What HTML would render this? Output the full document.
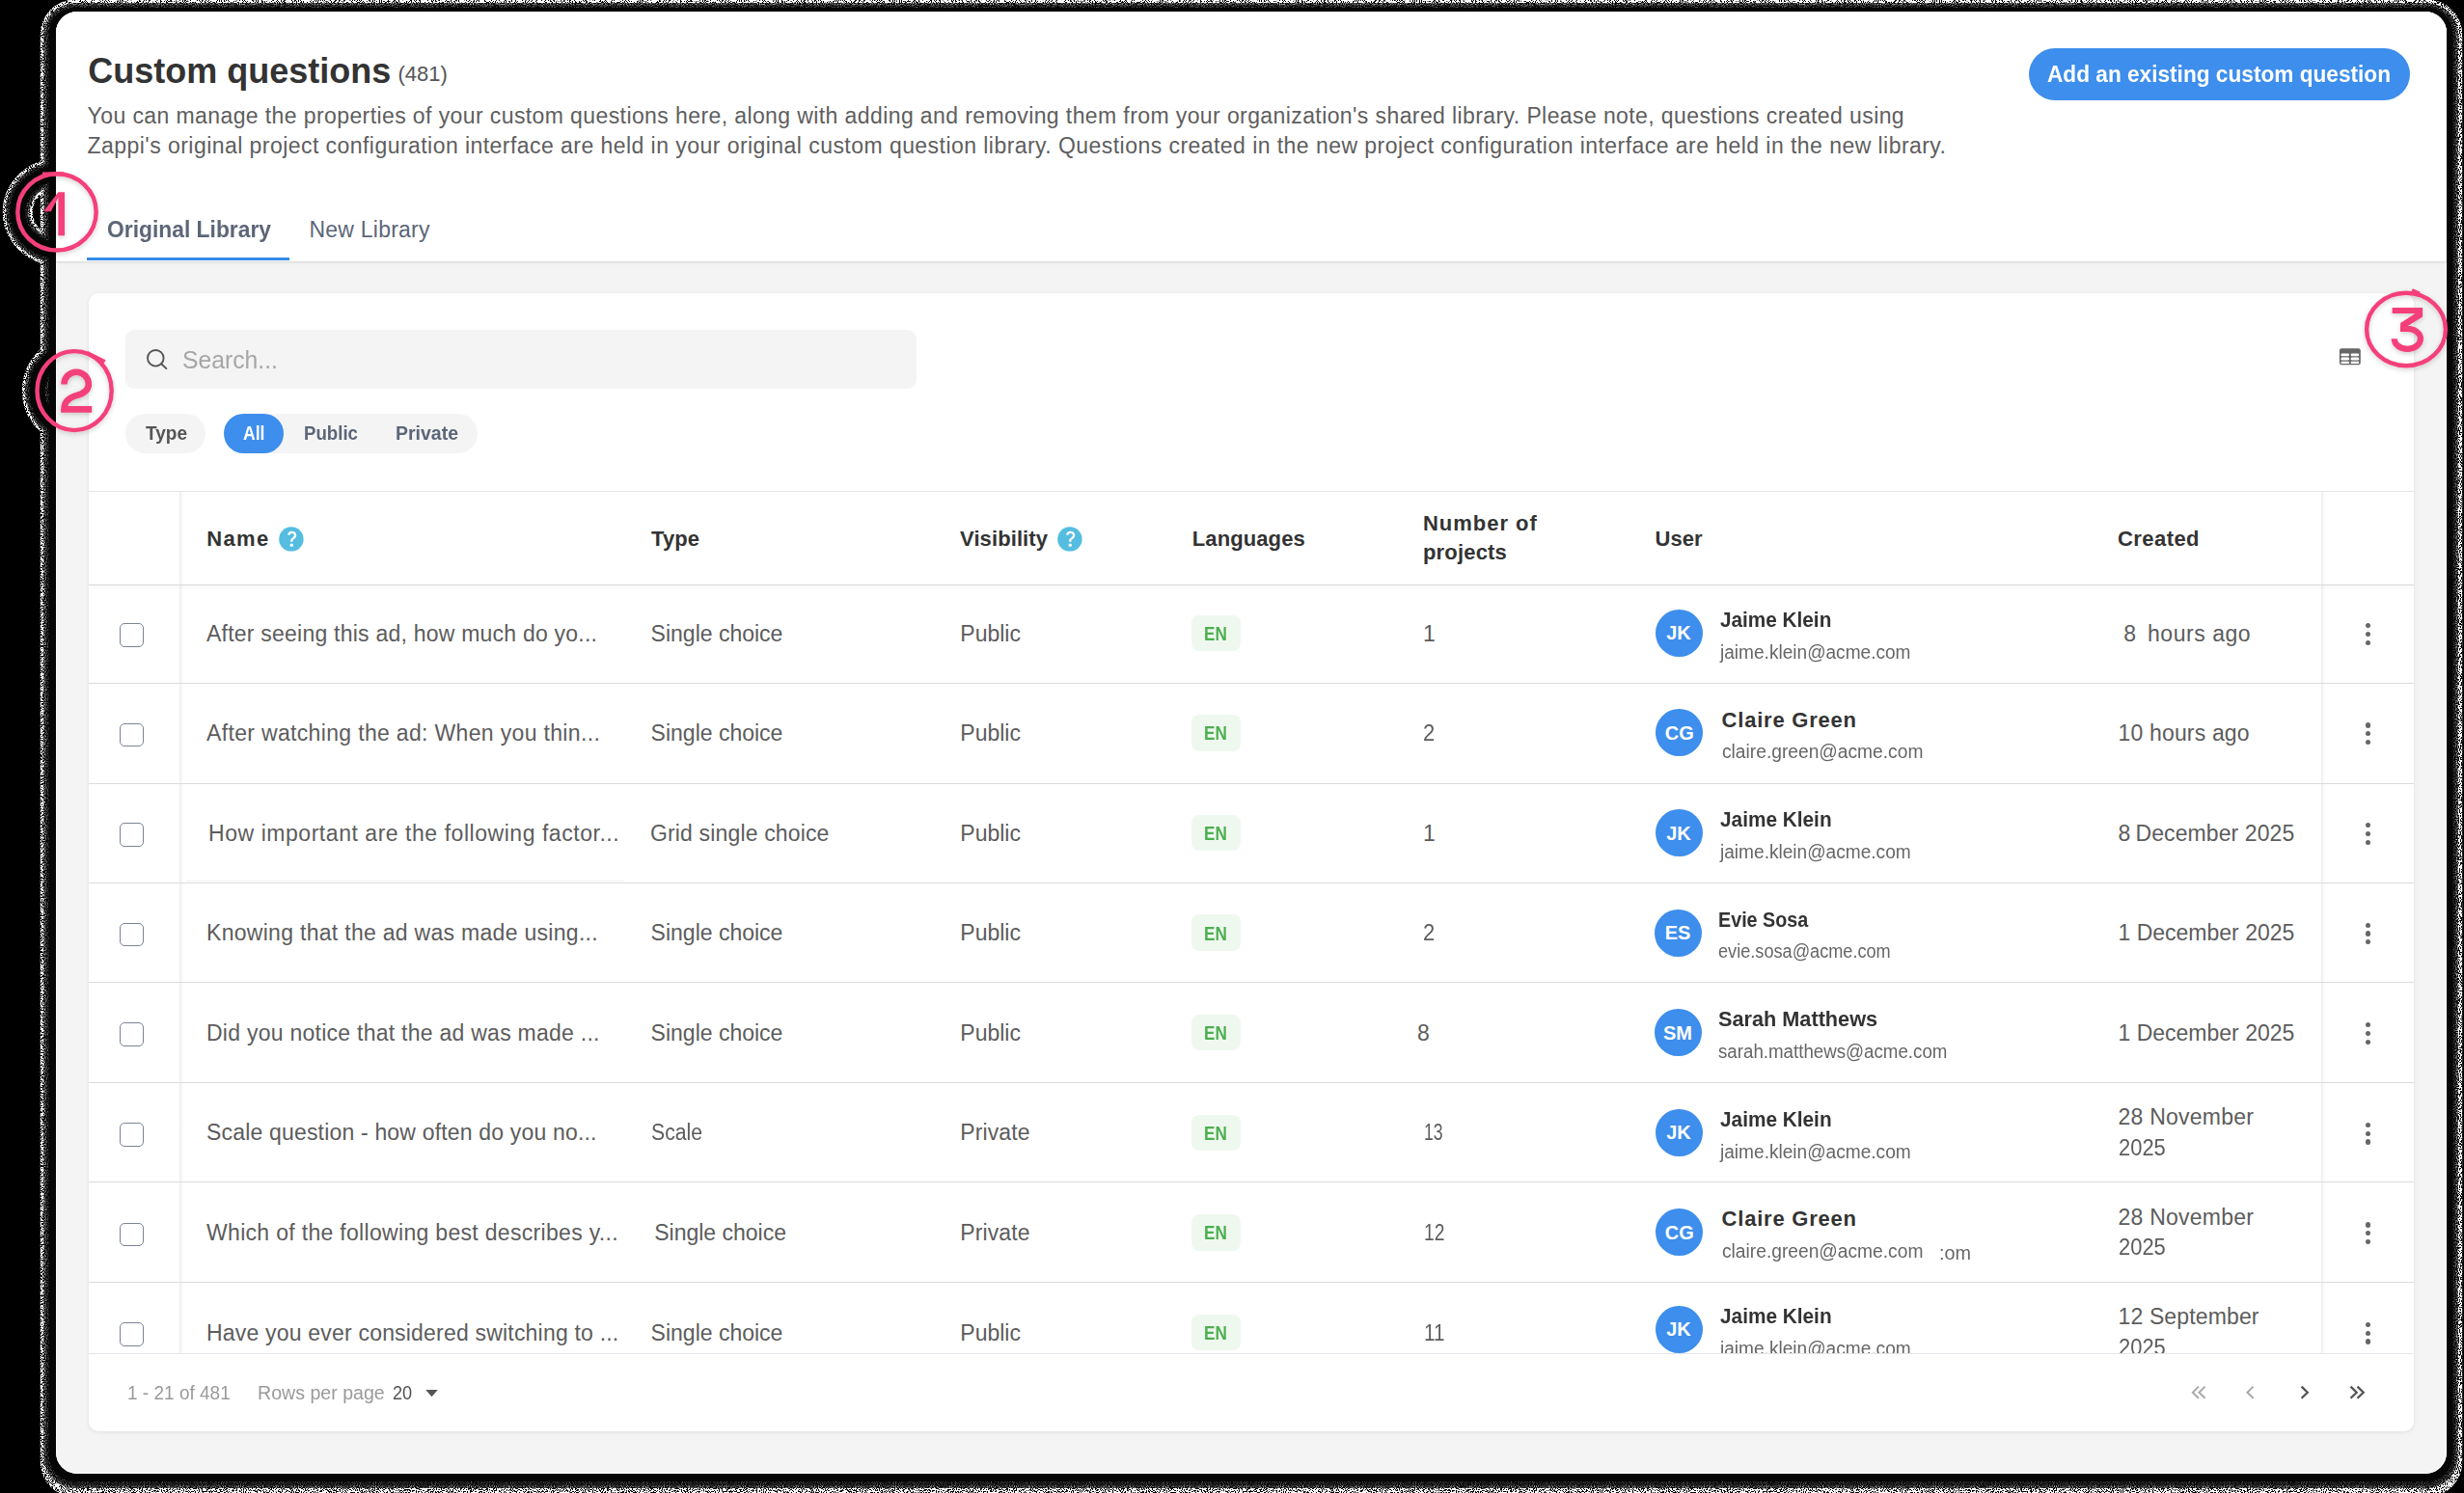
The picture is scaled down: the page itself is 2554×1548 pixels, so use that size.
<!DOCTYPE html>
<html><head><meta charset="utf-8">
<style>
html,body{margin:0;padding:0;}
body{width:2554px;height:1548px;background:#000;position:relative;overflow:hidden;font-family:"Liberation Sans",sans-serif;}
.abs{position:absolute;}
.t{position:absolute;white-space:pre;}
#panel{position:absolute;left:58px;top:12px;width:2478px;height:1516px;border-radius:22px;background:#f4f4f4;overflow:hidden;box-shadow:inset 0 0 0 1px #fff;}
.badge{position:absolute;width:51.25px;height:37.5px;border-radius:8px;background:#eff8ef;}
.av{position:absolute;width:49px;height:49px;border-radius:50%;background:#3d8eed;}
.dot{position:absolute;width:5.2px;height:5.2px;border-radius:50%;background:#666;}
.cb{position:absolute;width:22.6px;height:22.6px;border:1.5px solid #7a8494;border-radius:5px;background:#fff;}
</style></head>
<body>
<!-- halo -->
<svg class="abs" style="left:0;top:0" width="2554" height="1548" viewBox="0 0 2554 1548">
  <defs>
    <filter id="nzA" filterUnits="userSpaceOnUse" x="-20" y="-20" width="2600" height="1600" color-interpolation-filters="sRGB">
      <feTurbulence type="fractalNoise" baseFrequency="0.95" numOctaves="1" seed="3" result="n"/>
      <feColorMatrix in="n" type="matrix" values="0 0 0 40 -17.8  0 0 0 40 -17.8  0 0 0 40 -17.8  0 0 0 0 1" result="bw"/>
      <feComposite in="bw" in2="SourceGraphic" operator="in"/>
    </filter>
    <filter id="nzB" filterUnits="userSpaceOnUse" x="-20" y="-20" width="2600" height="1600" color-interpolation-filters="sRGB">
      <feTurbulence type="fractalNoise" baseFrequency="0.95" numOctaves="1" seed="7" result="n"/>
      <feColorMatrix in="n" type="matrix" values="0 0 0 2.4 -1.0  0 0 0 2.4 -1.0  0 0 0 2.4 -1.0  0 0 0 0 1" result="bw"/>
      <feComposite in="bw" in2="SourceGraphic" operator="in"/>
    </filter>
    <filter id="nzC" filterUnits="userSpaceOnUse" x="-20" y="-20" width="2600" height="1600" color-interpolation-filters="sRGB">
      <feTurbulence type="fractalNoise" baseFrequency="0.95" numOctaves="1" seed="11" result="n"/>
      <feColorMatrix in="n" type="matrix" values="0 0 0 1.1 -0.45  0 0 0 1.1 -0.45  0 0 0 1.1 -0.45  0 0 0 0 1" result="bw"/>
      <feComposite in="bw" in2="SourceGraphic" operator="in"/>
    </filter>
  </defs>
  <g filter="url(#nzA)">
    <rect x="41.8" y="-0.5" width="2510.4" height="1552.5" rx="36" fill="#fff"/>
    <ellipse cx="59" cy="219.9" rx="40.7" ry="39.6" fill="none" stroke="#fff" stroke-width="31"/>
    <ellipse cx="77.1" cy="405.1" rx="38.6" ry="41" fill="none" stroke="#fff" stroke-width="31"/>
  </g>
  <g filter="url(#nzB)">
    <rect x="45" y="3.1" width="2503" height="1540" rx="33" fill="#fff"/>
    <ellipse cx="59" cy="219.9" rx="40.7" ry="39.6" fill="none" stroke="#fff" stroke-width="25"/>
    <ellipse cx="77.1" cy="405.1" rx="38.6" ry="41" fill="none" stroke="#fff" stroke-width="25"/>
  </g>
  <g filter="url(#nzC)">
    <rect x="47.6" y="5.6" width="2497.8" height="1534.6" rx="30" fill="#fff"/>
    <ellipse cx="59" cy="219.9" rx="40.7" ry="39.6" fill="none" stroke="#fff" stroke-width="21"/>
    <ellipse cx="77.1" cy="405.1" rx="38.6" ry="41" fill="none" stroke="#fff" stroke-width="21"/>
  </g>
  <rect x="50.5" y="8" width="2492" height="1528" rx="27" fill="#060606"/>
    <ellipse cx="59" cy="219.9" rx="40.7" ry="39.6" fill="none" stroke="#060606" stroke-width="16"/>
    <ellipse cx="77.1" cy="405.1" rx="38.6" ry="41" fill="none" stroke="#060606" stroke-width="16"/>
</svg>

<div id="panel">
  <div class="abs" style="left:0;top:0;width:2478px;height:259px;background:#fff;border-bottom:1.5px solid #dcdcdc;box-shadow:0 1px 2px rgba(0,0,0,0.06)"></div>
</div>

<!-- button -->
<div class="abs" style="left:2103px;top:50px;width:395px;height:54px;border-radius:27px;background:#3d8eed"></div>
<!-- tab underline -->
<div class="abs" style="left:90px;top:267px;width:210px;height:3px;background:#338bea"></div>

<!-- card -->
<div class="abs" style="left:92px;top:304px;width:2410px;height:1180px;border-radius:10px;background:#fff;box-shadow:0 1px 4px rgba(0,0,0,0.09)"></div>

<!-- search -->
<div class="abs" style="left:130px;top:342px;width:820px;height:61px;border-radius:9px;background:#f4f4f4"></div>
<svg class="abs" style="left:150px;top:360px" width="26" height="26" viewBox="0 0 26 26">
  <circle cx="11.3" cy="11.3" r="8.3" fill="none" stroke="#555" stroke-width="1.9"/>
  <line x1="17.2" y1="17.2" x2="22.4" y2="22.1" stroke="#555" stroke-width="1.9" stroke-linecap="round"/>
</svg>
<!-- pills -->
<div class="abs" style="left:130px;top:429.25px;width:83px;height:40.75px;border-radius:20.4px;background:#f4f4f4"></div>
<div class="abs" style="left:232px;top:429.25px;width:263px;height:40.75px;border-radius:20.4px;background:#f4f4f4"></div>
<div class="abs" style="left:232px;top:429.25px;width:61.75px;height:40.75px;border-radius:20.4px;background:#3d8eed"></div>

<!-- table icon -->
<svg class="abs" style="left:2424px;top:360px" width="24" height="20" viewBox="0 0 24 20">
  <rect x="0.9" y="1.3" width="21.9" height="17" rx="2.2" fill="#666"/>
  <rect x="2.4" y="6.4" width="8.6" height="2.9" rx="1.3" fill="#fff"/>
  <rect x="12.6" y="6.4" width="8.6" height="2.9" rx="1.3" fill="#fff"/>
  <rect x="2.4" y="10.6" width="8.6" height="2.9" rx="1.3" fill="#fff"/>
  <rect x="12.6" y="10.6" width="8.6" height="2.9" rx="1.3" fill="#fff"/>
  <rect x="2.4" y="14.7" width="8.6" height="2.4" rx="1.2" fill="#fff"/>
  <rect x="12.6" y="14.7" width="8.6" height="2.4" rx="1.2" fill="#fff"/>
</svg>

<!-- table frame -->
<div class="abs" style="left:92px;top:509px;width:2410px;height:1px;background:#e6e6ea"></div>

<!-- body clip -->
<div class="abs" style="left:0;top:0;width:2554px;height:1403px;overflow:hidden">
  <div class="abs" style="left:186px;top:510px;width:4px;height:900px;background:linear-gradient(to right,#ebebeb,#f6f6f6 40%,#fdfdfd)"></div>
  <div class="abs" style="left:2406px;top:510px;width:4px;height:900px;background:linear-gradient(to right,#ebebeb,#f6f6f6 40%,#fdfdfd)"></div>
  <div class="abs" style="left:92px;top:708px;width:2410px;height:1px;background:#dcdcdc"></div>
  <div class="abs" style="left:92px;top:812px;width:2410px;height:1px;background:#dcdcdc"></div>
  <div class="abs" style="left:92px;top:915px;width:2410px;height:1px;background:#dcdcdc"></div>
  <div class="abs" style="left:92px;top:1018px;width:2410px;height:1px;background:#dcdcdc"></div>
  <div class="abs" style="left:92px;top:1122px;width:2410px;height:1px;background:#dcdcdc"></div>
  <div class="abs" style="left:92px;top:1225px;width:2410px;height:1px;background:#dcdcdc"></div>
  <div class="abs" style="left:92px;top:1329px;width:2410px;height:1px;background:#dcdcdc"></div>
  <div class="abs" style="left:193px;top:912.5px;width:454px;height:1px;background:#efefef"></div>
<div class="badge" style="left:1234.5px;top:637.65px"></div>
<div class="av" style="left:1715.50px;top:631.90px"></div>
<div class="dot" style="left:2451.50px;top:645.90px"></div>
<div class="dot" style="left:2451.50px;top:654.70px"></div>
<div class="dot" style="left:2451.50px;top:663.50px"></div>
<div class="cb" style="left:124.3px;top:646.10px"></div>
<div class="badge" style="left:1234.5px;top:741.22px"></div>
<div class="av" style="left:1716.30px;top:735.47px"></div>
<div class="dot" style="left:2451.50px;top:749.47px"></div>
<div class="dot" style="left:2451.50px;top:758.27px"></div>
<div class="dot" style="left:2451.50px;top:767.07px"></div>
<div class="cb" style="left:124.3px;top:749.67px"></div>
<div class="badge" style="left:1234.5px;top:844.79px"></div>
<div class="av" style="left:1715.50px;top:839.04px"></div>
<div class="dot" style="left:2451.50px;top:853.04px"></div>
<div class="dot" style="left:2451.50px;top:861.84px"></div>
<div class="dot" style="left:2451.50px;top:870.64px"></div>
<div class="cb" style="left:124.3px;top:853.24px"></div>
<div class="badge" style="left:1234.5px;top:948.36px"></div>
<div class="av" style="left:1714.50px;top:942.61px"></div>
<div class="dot" style="left:2451.50px;top:956.61px"></div>
<div class="dot" style="left:2451.50px;top:965.41px"></div>
<div class="dot" style="left:2451.50px;top:974.21px"></div>
<div class="cb" style="left:124.3px;top:956.81px"></div>
<div class="badge" style="left:1234.5px;top:1051.93px"></div>
<div class="av" style="left:1714.50px;top:1046.18px"></div>
<div class="dot" style="left:2451.50px;top:1060.18px"></div>
<div class="dot" style="left:2451.50px;top:1068.98px"></div>
<div class="dot" style="left:2451.50px;top:1077.78px"></div>
<div class="cb" style="left:124.3px;top:1060.38px"></div>
<div class="badge" style="left:1234.5px;top:1155.50px"></div>
<div class="av" style="left:1715.50px;top:1149.75px"></div>
<div class="dot" style="left:2451.50px;top:1163.75px"></div>
<div class="dot" style="left:2451.50px;top:1172.55px"></div>
<div class="dot" style="left:2451.50px;top:1181.35px"></div>
<div class="cb" style="left:124.3px;top:1163.95px"></div>
<div class="badge" style="left:1234.5px;top:1259.07px"></div>
<div class="av" style="left:1716.30px;top:1253.32px"></div>
<div class="dot" style="left:2451.50px;top:1267.32px"></div>
<div class="dot" style="left:2451.50px;top:1276.12px"></div>
<div class="dot" style="left:2451.50px;top:1284.92px"></div>
<div class="cb" style="left:124.3px;top:1267.52px"></div>
<div class="badge" style="left:1234.5px;top:1362.64px"></div>
<div class="av" style="left:1715.50px;top:1353.89px"></div>
<div class="dot" style="left:2451.50px;top:1370.89px"></div>
<div class="dot" style="left:2451.50px;top:1379.69px"></div>
<div class="dot" style="left:2451.50px;top:1388.49px"></div>
<div class="cb" style="left:124.3px;top:1371.09px"></div>
<div class="t" style="left:214.00px;top:642.53px;font-size:23px;line-height:29px;color:#5c5c5c;letter-spacing:0.228px;">After seeing this ad, how much do yo...</div>
<div class="t" style="left:674.60px;top:642.53px;font-size:23px;line-height:29px;color:#5c5c5c;">Single choice</div>
<div class="t" style="left:995.30px;top:642.53px;font-size:23px;line-height:29px;color:#5c5c5c;">Public</div>
<div class="t" style="left:1475.00px;top:642.53px;font-size:23px;line-height:29px;color:#5c5c5c;">1</div>
<div class="t" style="left:1248.25px;top:644.82px;font-size:20px;line-height:25px;color:#4caf50;font-weight:700;transform:scaleX(0.8544);transform-origin:0 0;">EN</div>
<div class="t" style="left:1700.00px;width:80px;text-align:center;top:644.47px;font-size:20px;line-height:25px;color:#fff;font-weight:700;">JK</div>
<div class="t" style="left:1783.00px;top:628.98px;font-size:22px;line-height:28px;color:#333;font-weight:700;transform:scaleX(0.9429);transform-origin:0 0;">Jaime Klein</div>
<div class="t" style="left:1783.00px;top:663.77px;font-size:20px;line-height:25px;color:#666;transform:scaleX(0.9540);transform-origin:0 0;">jaime.klein@acme.com</div>
<div class="t" style="left:2201.25px;top:642.53px;font-size:23px;line-height:29px;color:#5c5c5c;">8</div>
<div class="t" style="left:2226.00px;top:642.53px;font-size:23px;line-height:29px;color:#5c5c5c;letter-spacing:0.536px;">hours ago</div>
<div class="t" style="left:214.00px;top:746.10px;font-size:23px;line-height:29px;color:#5c5c5c;letter-spacing:0.335px;">After watching the ad: When you thin...</div>
<div class="t" style="left:674.60px;top:746.10px;font-size:23px;line-height:29px;color:#5c5c5c;">Single choice</div>
<div class="t" style="left:995.30px;top:746.10px;font-size:23px;line-height:29px;color:#5c5c5c;">Public</div>
<div class="t" style="left:1474.70px;top:746.10px;font-size:23px;line-height:29px;color:#5c5c5c;transform:scaleX(0.9534);transform-origin:0 0;">2</div>
<div class="t" style="left:1248.25px;top:748.39px;font-size:20px;line-height:25px;color:#4caf50;font-weight:700;transform:scaleX(0.8544);transform-origin:0 0;">EN</div>
<div class="t" style="left:1700.80px;width:80px;text-align:center;top:748.04px;font-size:20px;line-height:25px;color:#fff;font-weight:700;">CG</div>
<div class="t" style="left:1784.60px;top:732.55px;font-size:22px;line-height:28px;color:#333;font-weight:700;letter-spacing:0.778px;">Claire Green</div>
<div class="t" style="left:1784.60px;top:767.34px;font-size:20px;line-height:25px;color:#666;transform:scaleX(0.9601);transform-origin:0 0;">claire.green@acme.com</div>
<div class="t" style="left:2195.50px;top:746.10px;font-size:23px;line-height:29px;color:#5c5c5c;letter-spacing:0.165px;">10 hours ago</div>
<div class="t" style="left:216.10px;top:849.67px;font-size:23px;line-height:29px;color:#5c5c5c;letter-spacing:0.540px;">How important are the following factor...</div>
<div class="t" style="left:674.00px;top:849.67px;font-size:23px;line-height:29px;color:#5c5c5c;letter-spacing:0.152px;">Grid single choice</div>
<div class="t" style="left:995.30px;top:849.67px;font-size:23px;line-height:29px;color:#5c5c5c;">Public</div>
<div class="t" style="left:1475.00px;top:849.67px;font-size:23px;line-height:29px;color:#5c5c5c;">1</div>
<div class="t" style="left:1248.25px;top:851.96px;font-size:20px;line-height:25px;color:#4caf50;font-weight:700;transform:scaleX(0.8544);transform-origin:0 0;">EN</div>
<div class="t" style="left:1700.00px;width:80px;text-align:center;top:851.61px;font-size:20px;line-height:25px;color:#fff;font-weight:700;">JK</div>
<div class="t" style="left:1782.80px;top:836.12px;font-size:22px;line-height:28px;color:#333;font-weight:700;transform:scaleX(0.9454);transform-origin:0 0;">Jaime Klein</div>
<div class="t" style="left:1782.80px;top:870.91px;font-size:20px;line-height:25px;color:#666;transform:scaleX(0.9549);transform-origin:0 0;">jaime.klein@acme.com</div>
<div class="t" style="left:2195.50px;top:849.67px;font-size:23px;line-height:29px;color:#5c5c5c;">8</div>
<div class="t" style="left:2213.50px;top:849.67px;font-size:23px;line-height:29px;color:#5c5c5c;letter-spacing:0.087px;">December 2025</div>
<div class="t" style="left:214.00px;top:953.24px;font-size:23px;line-height:29px;color:#5c5c5c;letter-spacing:0.295px;">Knowing that the ad was made using...</div>
<div class="t" style="left:674.60px;top:953.24px;font-size:23px;line-height:29px;color:#5c5c5c;">Single choice</div>
<div class="t" style="left:995.30px;top:953.24px;font-size:23px;line-height:29px;color:#5c5c5c;">Public</div>
<div class="t" style="left:1474.70px;top:953.24px;font-size:23px;line-height:29px;color:#5c5c5c;transform:scaleX(0.9534);transform-origin:0 0;">2</div>
<div class="t" style="left:1248.25px;top:955.53px;font-size:20px;line-height:25px;color:#4caf50;font-weight:700;transform:scaleX(0.8544);transform-origin:0 0;">EN</div>
<div class="t" style="left:1699.00px;width:80px;text-align:center;top:955.18px;font-size:20px;line-height:25px;color:#fff;font-weight:700;">ES</div>
<div class="t" style="left:1781.30px;top:939.69px;font-size:22px;line-height:28px;color:#333;font-weight:700;transform:scaleX(0.8966);transform-origin:0 0;">Evie Sosa</div>
<div class="t" style="left:1781.30px;top:974.48px;font-size:20px;line-height:25px;color:#666;transform:scaleX(0.9069);transform-origin:0 0;">evie.sosa@acme.com</div>
<div class="t" style="left:2195.50px;top:953.24px;font-size:23px;line-height:29px;color:#5c5c5c;">1 December 2025</div>
<div class="t" style="left:214.00px;top:1056.81px;font-size:23px;line-height:29px;color:#5c5c5c;letter-spacing:0.260px;">Did you notice that the ad was made ...</div>
<div class="t" style="left:674.60px;top:1056.81px;font-size:23px;line-height:29px;color:#5c5c5c;">Single choice</div>
<div class="t" style="left:995.30px;top:1056.81px;font-size:23px;line-height:29px;color:#5c5c5c;">Public</div>
<div class="t" style="left:1469.00px;top:1056.81px;font-size:23px;line-height:29px;color:#5c5c5c;">8</div>
<div class="t" style="left:1248.25px;top:1059.10px;font-size:20px;line-height:25px;color:#4caf50;font-weight:700;transform:scaleX(0.8544);transform-origin:0 0;">EN</div>
<div class="t" style="left:1699.00px;width:80px;text-align:center;top:1058.75px;font-size:20px;line-height:25px;color:#fff;font-weight:700;">SM</div>
<div class="t" style="left:1781.30px;top:1043.26px;font-size:22px;line-height:28px;color:#333;font-weight:700;transform:scaleX(0.9857);transform-origin:0 0;">Sarah Matthews</div>
<div class="t" style="left:1781.30px;top:1078.05px;font-size:20px;line-height:25px;color:#666;transform:scaleX(0.9356);transform-origin:0 0;">sarah.matthews@acme.com</div>
<div class="t" style="left:2195.50px;top:1056.81px;font-size:23px;line-height:29px;color:#5c5c5c;">1 December 2025</div>
<div class="t" style="left:214.00px;top:1160.38px;font-size:23px;line-height:29px;color:#5c5c5c;letter-spacing:0.180px;">Scale question - how often do you no...</div>
<div class="t" style="left:674.60px;top:1160.38px;font-size:23px;line-height:29px;color:#5c5c5c;transform:scaleX(0.9227);transform-origin:0 0;">Scale</div>
<div class="t" style="left:995.30px;top:1160.38px;font-size:23px;line-height:29px;color:#5c5c5c;letter-spacing:0.101px;">Private</div>
<div class="t" style="left:1476.00px;top:1160.38px;font-size:23px;line-height:29px;color:#5c5c5c;transform:scaleX(0.7658);transform-origin:0 0;">13</div>
<div class="t" style="left:1248.25px;top:1162.67px;font-size:20px;line-height:25px;color:#4caf50;font-weight:700;transform:scaleX(0.8544);transform-origin:0 0;">EN</div>
<div class="t" style="left:1700.00px;width:80px;text-align:center;top:1162.32px;font-size:20px;line-height:25px;color:#fff;font-weight:700;">JK</div>
<div class="t" style="left:1782.80px;top:1146.83px;font-size:22px;line-height:28px;color:#333;font-weight:700;transform:scaleX(0.9454);transform-origin:0 0;">Jaime Klein</div>
<div class="t" style="left:1782.80px;top:1181.62px;font-size:20px;line-height:25px;color:#666;transform:scaleX(0.9549);transform-origin:0 0;">jaime.klein@acme.com</div>
<div class="t" style="left:2195.50px;top:1144.28px;font-size:23px;line-height:29px;color:#5c5c5c;letter-spacing:0.242px;">28 November</div>
<div class="t" style="left:2195.50px;top:1175.78px;font-size:23px;line-height:29px;color:#5c5c5c;transform:scaleX(0.9536);transform-origin:0 0;">2025</div>
<div class="t" style="left:214.00px;top:1263.95px;font-size:23px;line-height:29px;color:#5c5c5c;letter-spacing:0.313px;">Which of the following best describes y...</div>
<div class="t" style="left:678.20px;top:1263.95px;font-size:23px;line-height:29px;color:#5c5c5c;">Single choice</div>
<div class="t" style="left:995.30px;top:1263.95px;font-size:23px;line-height:29px;color:#5c5c5c;letter-spacing:0.101px;">Private</div>
<div class="t" style="left:1476.00px;top:1263.95px;font-size:23px;line-height:29px;color:#5c5c5c;transform:scaleX(0.8361);transform-origin:0 0;">12</div>
<div class="t" style="left:1248.25px;top:1266.24px;font-size:20px;line-height:25px;color:#4caf50;font-weight:700;transform:scaleX(0.8544);transform-origin:0 0;">EN</div>
<div class="t" style="left:1700.80px;width:80px;text-align:center;top:1265.89px;font-size:20px;line-height:25px;color:#fff;font-weight:700;">CG</div>
<div class="t" style="left:1784.60px;top:1250.40px;font-size:22px;line-height:28px;color:#333;font-weight:700;letter-spacing:0.778px;">Claire Green</div>
<div class="t" style="left:1784.60px;top:1285.19px;font-size:20px;line-height:25px;color:#666;transform:scaleX(0.9601);transform-origin:0 0;">claire.green@acme.com</div>
<div class="t" style="left:2009.50px;top:1286.89px;font-size:20px;line-height:25px;color:#666;transform:scaleX(0.9897);transform-origin:0 0;">:om</div>
<div class="t" style="left:2195.50px;top:1247.85px;font-size:23px;line-height:29px;color:#5c5c5c;letter-spacing:0.242px;">28 November</div>
<div class="t" style="left:2195.50px;top:1279.35px;font-size:23px;line-height:29px;color:#5c5c5c;transform:scaleX(0.9536);transform-origin:0 0;">2025</div>
<div class="t" style="left:214.00px;top:1367.52px;font-size:23px;line-height:29px;color:#5c5c5c;letter-spacing:0.197px;">Have you ever considered switching to ...</div>
<div class="t" style="left:674.60px;top:1367.52px;font-size:23px;line-height:29px;color:#5c5c5c;">Single choice</div>
<div class="t" style="left:995.30px;top:1367.52px;font-size:23px;line-height:29px;color:#5c5c5c;">Public</div>
<div class="t" style="left:1476.00px;top:1367.52px;font-size:23px;line-height:29px;color:#5c5c5c;transform:scaleX(0.8999);transform-origin:0 0;">11</div>
<div class="t" style="left:1248.25px;top:1369.81px;font-size:20px;line-height:25px;color:#4caf50;font-weight:700;transform:scaleX(0.8544);transform-origin:0 0;">EN</div>
<div class="t" style="left:1700.00px;width:80px;text-align:center;top:1366.46px;font-size:20px;line-height:25px;color:#fff;font-weight:700;">JK</div>
<div class="t" style="left:1782.80px;top:1350.97px;font-size:22px;line-height:28px;color:#333;font-weight:700;transform:scaleX(0.9454);transform-origin:0 0;">Jaime Klein</div>
<div class="t" style="left:1782.80px;top:1385.76px;font-size:20px;line-height:25px;color:#666;transform:scaleX(0.9549);transform-origin:0 0;">jaime.klein@acme.com</div>
<div class="t" style="left:2195.50px;top:1351.42px;font-size:23px;line-height:29px;color:#5c5c5c;letter-spacing:0.138px;">12 September</div>
<div class="t" style="left:2195.50px;top:1382.92px;font-size:23px;line-height:29px;color:#5c5c5c;transform:scaleX(0.9536);transform-origin:0 0;">2025</div>
</div>
<div class="abs" style="left:92px;top:605.6px;width:2410px;height:1.2px;background:#d8d8d8;box-shadow:0 2px 3px rgba(0,0,0,0.08)"></div>
<div class="abs" style="left:92px;top:1402.8px;width:2410px;height:1.2px;background:#e4e4ea"></div>

<!-- help icons -->
<svg class="abs" style="left:289px;top:546px" width="26" height="26" viewBox="0 0 26 26">
  <circle cx="12.9" cy="12.9" r="12.7" fill="#54bde0"/>
  <path d="M10 8.7 C10.7 6.6 12 5.9 13.3 5.9 C15.6 5.9 17.1 7.3 17.1 9.3 C17.1 11.6 14.2 12.1 13.3 13.9 L13.3 15.8" fill="none" stroke="#fff" stroke-width="2.3"/>
  <circle cx="13.3" cy="19.2" r="1.7" fill="#fff"/>
</svg>
<svg class="abs" style="left:1096px;top:546px" width="26" height="26" viewBox="0 0 26 26">
  <circle cx="12.9" cy="12.9" r="12.7" fill="#54bde0"/>
  <path d="M10 8.7 C10.7 6.6 12 5.9 13.3 5.9 C15.6 5.9 17.1 7.3 17.1 9.3 C17.1 11.6 14.2 12.1 13.3 13.9 L13.3 15.8" fill="none" stroke="#fff" stroke-width="2.3"/>
  <circle cx="13.3" cy="19.2" r="1.7" fill="#fff"/>
</svg>

<!-- footer icons -->
<svg class="abs" style="left:0;top:1420px" width="2554" height="50" viewBox="0 1420 2554 50">
  <path d="M441.3 1441 L453.8 1441 L447.5 1448.3 Z" fill="#555"/>
  <g fill="none" stroke="#a8a8a8" stroke-width="1.9">
    <path d="M2279 1437.6 L2272.8 1443.7 L2279 1449.8"/>
    <path d="M2285.6 1437.6 L2279.4 1443.7 L2285.6 1449.8"/>
    <path d="M2335.6 1437.6 L2329.4 1443.7 L2335.6 1449.8"/>
  </g>
  <g fill="none" stroke="#555" stroke-width="2.3">
    <path d="M2385.6 1437.6 L2391.8 1443.7 L2385.6 1449.8"/>
    <path d="M2436.5 1437.6 L2442.7 1443.7 L2436.5 1449.8"/>
    <path d="M2443.5 1437.6 L2449.7 1443.7 L2443.5 1449.8"/>
  </g>
</svg>

<div class="t" style="left:91.30px;top:50.78px;font-size:36px;line-height:45px;color:#333;font-weight:700;">Custom questions</div>
<div class="t" style="left:412.50px;top:63.38px;font-size:22px;line-height:28px;color:#555;">(481)</div>
<div class="t" style="left:90.60px;top:105.53px;font-size:23px;line-height:29px;color:#5e5e5e;letter-spacing:0.402px;">You can manage the properties of your custom questions here, along with adding and removing them from your organization's shared library. Please note, questions created using</div>
<div class="t" style="left:90.60px;top:137.43px;font-size:23px;line-height:29px;color:#5e5e5e;letter-spacing:0.449px;">Zappi's original project configuration interface are held in your original custom question library. Questions created in the new project configuration interface are held in the new library.</div>
<div class="t" style="left:2122.00px;top:62.53px;font-size:23px;line-height:29px;color:#fff;font-weight:700;transform:scaleX(0.9844);transform-origin:0 0;">Add an existing custom question</div>
<div class="t" style="left:110.50px;top:223.78px;font-size:23px;line-height:29px;color:#5c6678;font-weight:700;transform:scaleX(0.9926);transform-origin:0 0;">Original Library</div>
<div class="t" style="left:320.50px;top:223.78px;font-size:23px;line-height:29px;color:#5c6678;letter-spacing:0.228px;">New Library</div>
<div class="t" style="left:188.75px;top:357.84px;font-size:25px;line-height:31px;color:#a6a6a6;transform:scaleX(0.9894);transform-origin:0 0;">Search...</div>
<div class="t" style="left:150.50px;top:436.82px;font-size:20px;line-height:25px;color:#555;font-weight:700;transform:scaleX(0.9513);transform-origin:0 0;">Type</div>
<div class="t" style="left:252.00px;top:436.82px;font-size:20px;line-height:25px;color:#fff;font-weight:700;transform:scaleX(0.8802);transform-origin:0 0;">All</div>
<div class="t" style="left:314.50px;top:436.82px;font-size:20px;line-height:25px;color:#5c6678;font-weight:700;transform:scaleX(0.9331);transform-origin:0 0;">Public</div>
<div class="t" style="left:410.00px;top:436.82px;font-size:20px;line-height:25px;color:#5c6678;font-weight:700;transform:scaleX(0.9742);transform-origin:0 0;">Private</div>
<div class="t" style="left:214.25px;top:544.58px;font-size:22px;line-height:28px;color:#333;font-weight:700;letter-spacing:1.359px;">Name</div>
<div class="t" style="left:675.00px;top:544.58px;font-size:22px;line-height:28px;color:#333;font-weight:700;letter-spacing:0.094px;">Type</div>
<div class="t" style="left:995.00px;top:544.58px;font-size:22px;line-height:28px;color:#333;font-weight:700;letter-spacing:0.102px;">Visibility</div>
<div class="t" style="left:1235.75px;top:544.58px;font-size:22px;line-height:28px;color:#333;font-weight:700;letter-spacing:0.107px;">Languages</div>
<div class="t" style="left:1475.00px;top:528.98px;font-size:22px;line-height:28px;color:#333;font-weight:700;letter-spacing:0.975px;">Number of</div>
<div class="t" style="left:1475.00px;top:559.38px;font-size:22px;line-height:28px;color:#333;font-weight:700;letter-spacing:0.172px;">projects</div>
<div class="t" style="left:1715.50px;top:544.58px;font-size:22px;line-height:28px;color:#333;font-weight:700;letter-spacing:0.026px;">User</div>
<div class="t" style="left:2195.00px;top:544.58px;font-size:22px;line-height:28px;color:#333;font-weight:700;letter-spacing:0.430px;">Created</div>
<div class="t" style="left:132.00px;top:1431.82px;font-size:20px;line-height:25px;color:#9a9a9a;transform:scaleX(0.9505);transform-origin:0 0;">1 - 21 of 481</div>
<div class="t" style="left:267.00px;top:1431.82px;font-size:20px;line-height:25px;color:#9a9a9a;transform:scaleX(0.9793);transform-origin:0 0;">Rows per page</div>
<div class="t" style="left:406.75px;top:1431.82px;font-size:20px;line-height:25px;color:#555;transform:scaleX(0.9101);transform-origin:0 0;">20</div>

<!-- annotations -->
<svg class="abs" style="left:0;top:0" width="2554" height="1548" viewBox="0 0 2554 1548">
  <defs>
    <filter id="sh" x="-20%" y="-20%" width="140%" height="140%">
      <feDropShadow dx="0" dy="2" stdDeviation="2.5" flood-color="#000" flood-opacity="0.18"/>
    </filter>
  </defs>
  <g filter="url(#sh)" fill="none" stroke="#f43f7a" stroke-width="4.4">
    <ellipse cx="59" cy="219.9" rx="40.7" ry="39.6"/>
    <path d="M44 180.6 L66 180.2" stroke-width="4"/>
    <ellipse cx="77.1" cy="405.1" rx="38.6" ry="41"/>
    <path d="M90 365.8 L108.6 375" stroke-width="4"/>
    <ellipse cx="2494" cy="341.5" rx="40.9" ry="37.7"/>
    <path d="M2500 301 L2508 304.5" stroke-width="4"/>
    <path d="M2479.6 318.9 L2511.1 318.9 L2511.1 328.5 L2496 337.8 L2496 343.9 L2488.1 343.9 L2488.1 335.1 L2503.5 324.9 L2479.6 324.9 Z" fill="#f43f7a" stroke="none"/>
    <path d="M2488.1 340.8 H2495.3 A13.6 10.5 0 1 1 2481.7 351.3" stroke-width="6.2"/>
    <path d="M66.45 398.4 A12.7 12.7 0 0 1 91.85 398.4 C91.85 405.5 86 408.2 79 410.2 C70.5 412.8 66.45 417 66.45 424.4 L95.2 424.4" stroke-width="6.6"/>
    <path d="M60.4 199.3 L67 199.3 L67 244.2 L60.4 244.2 L60.4 204.8 L52.7 219.2 L45 219.2 Z" fill="#f43f7a" stroke="none"/>
  </g>
</svg>
</body></html>
